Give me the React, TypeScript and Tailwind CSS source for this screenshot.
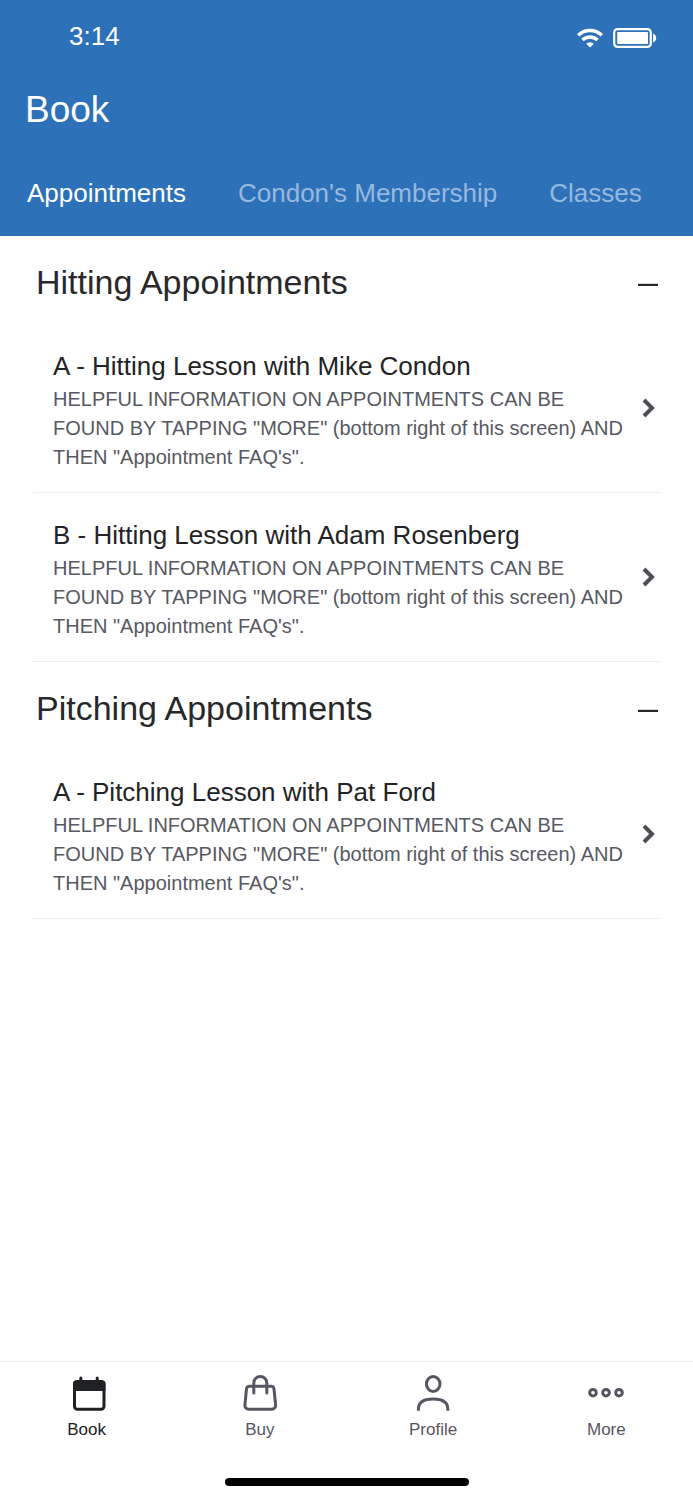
import type { ReactNode } from "react";

interface Lesson {
    title: string;
    description: string;
}

interface Section {
    name: string;
    lessons: Lesson[];
}

interface NavItem {
    label: string;
    icon: ReactNode;
    active?: boolean;
}

const info =
    'HELPFUL INFORMATION ON APPOINTMENTS CAN BE FOUND BY TAPPING "MORE" (bottom right of this screen) AND THEN "Appointment FAQ\'s".';

const tabs = ["Appointments", "Condon's Membership", "Classes"];

const sections: Section[] = [
    {
        name: "Hitting Appointments",
        lessons: [
            { title: "A - Hitting Lesson with Mike Condon", description: info },
            { title: "B - Hitting Lesson with Adam Rosenberg", description: info },
        ],
    },
    {
        name: "Pitching Appointments",
        lessons: [{ title: "A - Pitching Lesson with Pat Ford", description: info }],
    },
];

function WifiIcon() {
    return (
        <svg width="26" height="20" viewBox="0 0 26 20" fill="none" stroke="currentColor" strokeWidth="3.4">
            <path d="M1.2 7.3a17 17 0 0 1 23.6 0" />
            <path d="M5.4 12a11 11 0 0 1 15.2 0" />
            <path d="M9.2 15.8a5.4 5.4 0 0 1 7.6 0L13 19.5z" fill="currentColor" stroke="none" />
        </svg>
    );
}

function BatteryIcon() {
    return (
        <svg width="44" height="20" viewBox="0 0 44 20" fill="none">
            <rect x="1.2" y="1.2" width="36.6" height="17.6" rx="3.2" stroke="currentColor" strokeWidth="2.2" />
            <rect x="4.2" y="4" width="30.8" height="12" rx="0.8" fill="currentColor" />
            <path d="M40 5.6c2 .6 3.2 2.4 3.2 4.4S42 13.8 40 14.4z" fill="currentColor" />
        </svg>
    );
}

function CalendarIcon() {
    return (
        <svg width="40" height="40" viewBox="0 0 40 40" fill="none" stroke="currentColor" strokeWidth="3">
            <rect x="7.5" y="9.5" width="29.5" height="27.8" rx="3" />
            <path d="M6 11.5a3 3 0 0 1 3-3h26.5a3 3 0 0 1 3 3v7.5H6z" fill="currentColor" stroke="none" />
            <path d="M13.8 6v5M30.2 6v5" strokeLinecap="round" />
        </svg>
    );
}

function BagIcon() {
    return (
        <svg width="40" height="40" viewBox="0 0 40 40" fill="none" stroke="currentColor" strokeWidth="3" strokeLinecap="round" strokeLinejoin="round">
            <path d="M9.5 14.3h21.5a3 3 0 0 1 3 2.6l1.6 16.3a3.8 3.8 0 0 1-3.8 4.1H8.7a3.8 3.8 0 0 1-3.8-4.1l1.6-16.3a3 3 0 0 1 3-2.6z" />
            <path d="M13.8 21v-10a6.5 6.5 0 0 1 13 0v10" />
        </svg>
    );
}

function ProfileIcon() {
    return (
        <svg width="40" height="40" viewBox="0 0 40 40" fill="none" stroke="currentColor" strokeWidth="3">
            <ellipse cx="20.2" cy="12" rx="6.8" ry="7.5" />
            <path d="M5.4 38.8v-1.8c0-6.6 5.6-10 14.7-10s14.7 3.4 14.7 10v1.8" />
        </svg>
    );
}

function MoreIcon() {
    return (
        <svg width="40" height="40" viewBox="0 0 40 40" fill="none" stroke="currentColor" strokeWidth="3">
            <circle cx="7" cy="20.7" r="3.3" />
            <circle cx="20" cy="20.7" r="3.3" />
            <circle cx="33" cy="20.7" r="3.3" />
        </svg>
    );
}

const navItems: NavItem[] = [
    { label: "Book", icon: <CalendarIcon />, active: true },
    { label: "Buy", icon: <BagIcon /> },
    { label: "Profile", icon: <ProfileIcon /> },
    { label: "More", icon: <MoreIcon /> },
];

function LessonRow({ title, description }: Lesson) {
    return (
        <li className="border-b border-[#ededee]">
            <button className="flex w-full items-center justify-between pt-6 pr-1 pb-5 pl-5 text-left">
                <span className="block min-w-0 flex-1">
                    <span className="block text-[26px] leading-9 text-[#232325]">{title}</span>
                    <span className="mt-px block text-[20px] leading-[29px] text-[#575862]">{description}</span>
                </span>
                <svg className="shrink-0" width="16" height="24" viewBox="0 0 16 24" fill="none" stroke="#4e4f54" strokeWidth="4">
                    <path d="M4 2l8 8-8 8" />
                </svg>
            </button>
        </li>
    );
}

export default function App() {
    return (
        <div className="flex min-h-screen flex-col bg-white font-['Liberation_Sans',Arial,sans-serif]">
            <header className="bg-[#2d71b9] text-white">
                <div className="flex h-[72px] items-center justify-between pr-9 pl-[69px]">
                    <span className="text-[26px] leading-8">3:14</span>
                    <div className="flex items-center gap-[10px] pt-1">
                        <WifiIcon />
                        <BatteryIcon />
                    </div>
                </div>
                <h1 className="px-[25px] pt-3 text-[37px] leading-[52px]">Book</h1>
                <nav className="flex gap-[52px] px-[27px] pt-[37px] pb-[23px] text-[26px] leading-10 whitespace-nowrap">
                    {tabs.map((tab, i) => (
                        <a key={tab} href="#" className={i === 0 ? "text-white" : "text-[#97b9de]"}>
                            {tab}
                        </a>
                    ))}
                </nav>
            </header>

            <main className="flex-1 px-[33px]">
                {sections.map((section) => (
                    <section key={section.name}>
                        <h2>
                            <button className="flex w-full items-center justify-between pt-[22px] pb-[18px] pl-[3px] text-left text-[34px] leading-[48px] text-[#28282a]">
                                {section.name}
                                <svg width="22" height="8" viewBox="0 0 22 8" stroke="#28282a" strokeWidth="2.4">
                                    <path d="M0 7h20" />
                                </svg>
                            </button>
                        </h2>
                        <ul>
                            {section.lessons.map((lesson) => (
                                <LessonRow key={lesson.title} {...lesson} />
                            ))}
                        </ul>
                    </section>
                ))}
            </main>

            <footer className="border-t border-[#f0f0f1] pt-[10px] pb-[14px]">
                <nav className="grid grid-cols-4">
                    {navItems.map((item) => (
                        <a
                            key={item.label}
                            href="#"
                            className={`flex flex-col items-center gap-[6px] text-[17px] leading-6 ${item.active ? "text-[#202125]" : "text-[#555661]"}`}
                        >
                            {item.icon}
                            {item.label}
                        </a>
                    ))}
                </nav>
                <div className="mx-auto mt-9 h-2 w-[244px] rounded-full bg-black" />
            </footer>
        </div>
    );
}
